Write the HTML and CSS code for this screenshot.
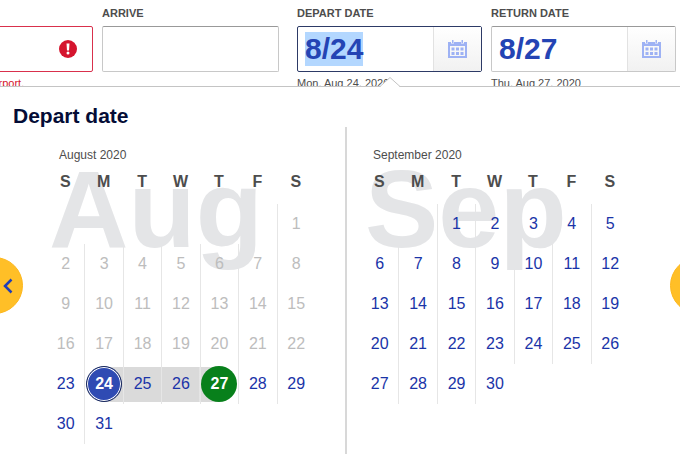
FILE: index.html
```html
<!DOCTYPE html>
<html lang="en">
<head>
<meta charset="utf-8">
<title>Depart date</title>
<link rel="stylesheet" href="styles.css">
</head>
<body>
<form class="search">
  <div class="group places">
    <div class="field from">
      <span class="label"></span>
      <div class="box error">
        <input type="text" aria-label="Depart" aria-describedby="from-error">
        <svg class="alert" viewBox="0 0 18 18" aria-hidden="true"><circle cx="9" cy="9" r="9" fill="#d5152e"/><path d="M7.500 3.500h3L10 10.500H8z" fill="#fff"/><circle cx="9" cy="13" r="1.500" fill="#fff"/></svg>
      </div>
      <p class="hint error-text" id="from-error">airport.</p>
    </div>
    <div class="field to">
      <label class="label" for="arrive">ARRIVE</label>
      <div class="box"><input type="text" id="arrive"></div>
    </div>
  </div>
  <div class="group dates">
    <div class="field">
      <label class="label" for="depart">DEPART DATE</label>
      <div class="box active">
        <input class="date" type="text" id="depart" value="8/24" autocomplete="off">
        <button class="open" type="button" aria-label="Open depart calendar">
          <svg viewBox="0 0 19 18" aria-hidden="true"><path fill="#9eb2f4" fill-rule="evenodd" d="M0 2h3v1.500h3V2h7v1.500h3V2h3v16H0zM2 6v10h15V6z"/><path fill="#9eb2f4" d="M4 0h1.500v3H4zM13.500 0H15v3h-1.500zM3.500 7.500h3v3h-3zM8 7.500h3v3H8zM12.500 7.500h3v3h-3zM3.500 12h3v3h-3zM8 12h3v3H8zM12.500 12h3v3h-3z"/></svg>
        </button>
      </div>
      <p class="hint">Mon, Aug 24, 2020</p>
    </div>
    <div class="field">
      <label class="label" for="return">RETURN DATE</label>
      <div class="box">
        <input class="date" type="text" id="return" value="8/27" autocomplete="off">
        <button class="open" type="button" aria-label="Open return calendar">
          <svg viewBox="0 0 19 18" aria-hidden="true"><path fill="#9eb2f4" fill-rule="evenodd" d="M0 2h3v1.500h3V2h7v1.500h3V2h3v16H0zM2 6v10h15V6z"/><path fill="#9eb2f4" d="M4 0h1.500v3H4zM13.500 0H15v3h-1.500zM3.500 7.500h3v3h-3zM8 7.500h3v3H8zM12.500 7.500h3v3h-3zM3.500 12h3v3h-3zM8 12h3v3H8zM12.500 12h3v3h-3z"/></svg>
        </button>
      </div>
      <p class="hint">Thu, Aug 27, 2020</p>
    </div>
  </div>
</form>

<section class="panel">
  <svg class="pointer" viewBox="0 0 20 11" aria-hidden="true"><path d="M0 10 10 0.500 20 10V11H0z" fill="#fff"/><path d="M0 9.500 10 0.500l10 9" fill="none" stroke="#c4c4c4"/></svg>
  <h1>Depart date</h1>
  <button class="arrow prev" type="button" aria-label="Previous month"><svg viewBox="0 0 10 16" aria-hidden="true"><path d="M8.500 1.500 2 8l6.500 6.500" fill="none" stroke="#1f3eb8" stroke-width="2.500"/></svg></button>
  <button class="arrow next" type="button" aria-label="Next month"></button>
  <div class="months">
    <div class="month first">
      <div class="watermark" aria-hidden="true">Aug</div>
      <table>
        <caption>August 2020</caption>
        <thead><tr><th>S</th><th>M</th><th>T</th><th>W</th><th>T</th><th>F</th><th>S</th></tr></thead>
        <tbody>
          <tr><td class="none" colspan="6"></td><td><button disabled>1</button></td></tr>
          <tr><td><button disabled>2</button></td><td><button disabled>3</button></td><td><button disabled>4</button></td><td><button disabled>5</button></td><td><button disabled>6</button></td><td><button disabled>7</button></td><td><button disabled>8</button></td></tr>
          <tr><td><button disabled>9</button></td><td><button disabled>10</button></td><td><button disabled>11</button></td><td><button disabled>12</button></td><td><button disabled>13</button></td><td><button disabled>14</button></td><td><button disabled>15</button></td></tr>
          <tr><td><button disabled>16</button></td><td><button disabled>17</button></td><td><button disabled>18</button></td><td><button disabled>19</button></td><td><button disabled>20</button></td><td><button disabled>21</button></td><td><button disabled>22</button></td></tr>
          <tr><td><button>23</button></td><td class="range start"><button class="depart">24</button></td><td class="range"><button>25</button></td><td class="range"><button>26</button></td><td class="range end"><button class="return">27</button></td><td><button>28</button></td><td><button>29</button></td></tr>
          <tr><td><button>30</button></td><td><button>31</button></td><td class="none" colspan="5"></td></tr>
        </tbody>
      </table>
    </div>
    <div class="month second">
      <div class="watermark" aria-hidden="true">Sep</div>
      <table>
        <caption>September 2020</caption>
        <thead><tr><th>S</th><th>M</th><th>T</th><th>W</th><th>T</th><th>F</th><th>S</th></tr></thead>
        <tbody>
          <tr><td class="none" colspan="2"></td><td><button>1</button></td><td><button>2</button></td><td><button>3</button></td><td><button>4</button></td><td><button>5</button></td></tr>
          <tr><td><button>6</button></td><td><button>7</button></td><td><button>8</button></td><td><button>9</button></td><td><button>10</button></td><td><button>11</button></td><td><button>12</button></td></tr>
          <tr><td><button>13</button></td><td><button>14</button></td><td><button>15</button></td><td><button>16</button></td><td><button>17</button></td><td><button>18</button></td><td><button>19</button></td></tr>
          <tr><td><button>20</button></td><td><button>21</button></td><td><button>22</button></td><td><button>23</button></td><td><button>24</button></td><td><button>25</button></td><td><button>26</button></td></tr>
          <tr><td><button>27</button></td><td><button>28</button></td><td><button>29</button></td><td><button>30</button></td><td class="none" colspan="3"></td></tr>
        </tbody>
      </table>
    </div>
  </div>
</section>
<script src="script.js"></script>
</body>
</html>
```

FILE: styles.css
```css
* { box-sizing: border-box; }

body {
  margin: 0;
  min-height: 100vh;
  display: flex;
  flex-direction: column;
  overflow: hidden;
  background: #fff;
  color: #4d4d4d;
  font-family: "Liberation Sans", Arial, sans-serif;
}

button, input { font: inherit; color: inherit; border: 0; padding: 0; background: none; }

/* Search fields; the calendar panel covers the lower part of the hints */
.search { display: flex; gap: 18px; height: 86px; padding-right: 4px; overflow: hidden; }
.group { display: flex; gap: 9px; min-width: 0; }
.places { flex: 279; }
.dates { flex: 379; }
.field { flex: 1; min-width: 0; padding-top: 4px; }
.from { flex: 103; margin-left: -10px; }
.to { flex: 177; }

.label { display: block; height: 22px; line-height: 18px; font-size: 11px; font-weight: bold; }

.box {
  display: flex;
  height: 46px;
  border: 1px solid #c8c8c8;
  border-top-color: #999;
  border-radius: 2px;
}
.box input { flex: 1; width: 0; min-width: 0; outline: none; }
.box.error { border-color: #d9304c; align-items: center; padding-right: 15px; }
.box.active { border-color: #2d3a66; }
.alert { width: 18px; height: 18px; }

.box .date { padding-left: 7px; font-size: 30px; font-weight: bold; color: #2444b4; caret-color: transparent; }
.date::selection { background: #b3d7ff; color: #2444b4; }

.open {
  display: flex;
  align-items: center;
  justify-content: center;
  width: 48px;
  border-left: 1px solid #e2e2e2;
  background: linear-gradient(#fff, #f1f1f1);
}
.open svg { width: 19px; height: 18px; }

.hint { margin: 0; padding-top: 4px; line-height: 14px; font-size: 11px; white-space: nowrap; }
.error-text { color: #d5152e; }

/* Calendar panel */
.panel { position: relative; flex: 1; display: flex; flex-direction: column; border-top: 1px solid #c4c4c4; background: #fff; }
.pointer { position: absolute; top: -10px; left: 380px; width: 20px; height: 11px; }
h1 { margin: 0; padding: 17px 13px 0; line-height: 23px; font-size: 21px; color: #040c36; }

.months { flex: 1; display: grid; grid-template-columns: 345fr 335fr; }
.month { position: relative; padding-top: 20px; }
.first { padding-left: 46px; padding-right: 30px; }
.second { padding-left: 13px; padding-right: 51px; border-left: 2px solid #d8d8d8; }

.watermark {
  position: absolute;
  z-index: 1;
  top: 27px;
  left: 49px;
  line-height: 110px;
  font-size: 110px;
  font-weight: bold;
  color: #e4e5e7;
}
.second .watermark { left: 18px; }

table { width: 100%; table-layout: fixed; border-collapse: separate; border-spacing: 0; }
caption { padding-left: 13px; line-height: 16px; font-size: 12px; text-align: left; }
th { height: 41px; padding: 11px 0 0; vertical-align: top; line-height: 16px; font-size: 16px; }
thead { position: relative; z-index: 2; }

td { height: 40px; padding: 0; border-left: 1px solid #e6e6e6; text-align: center; }
td:first-child { border-left-color: transparent; }
td.none { border: 0; }
td button {
  position: relative;
  z-index: 2;
  display: block;
  width: 36px;
  height: 36px;
  margin: 0 auto;
  border-radius: 50%;
  font-size: 16px;
  color: #1a34a8;
}
td button:disabled { color: #bdbdbd; }

.range { background: linear-gradient(#dadada, #dadada) center / 100% 35px no-repeat; }
.range.start { background-position: right; background-size: 50% 35px; }
.range.end { background-position: left; background-size: 50% 35px; }
td .depart {
  border: 1px solid #1b2a5c;
  background: #2f4bb3;
  box-shadow: inset 0 0 0 1px #fff;
  color: #fff;
  font-weight: bold;
}
td .return { background: #08801b; color: #fff; font-weight: bold; }

.arrow {
  position: absolute;
  z-index: 3;
  top: 170px;
  display: flex;
  align-items: center;
  justify-content: flex-end;
  width: 57px;
  height: 57px;
  border: 1px solid #fdb71d;
  border-radius: 50%;
  background: #ffbf27;
}
.prev { left: -34px; padding-right: 9px; }
.next { right: -47px; }
.arrow svg { width: 10px; height: 16px; }
```

FILE: script.js
```js
const depart = document.getElementById("depart");
depart.focus();
depart.select();
```
